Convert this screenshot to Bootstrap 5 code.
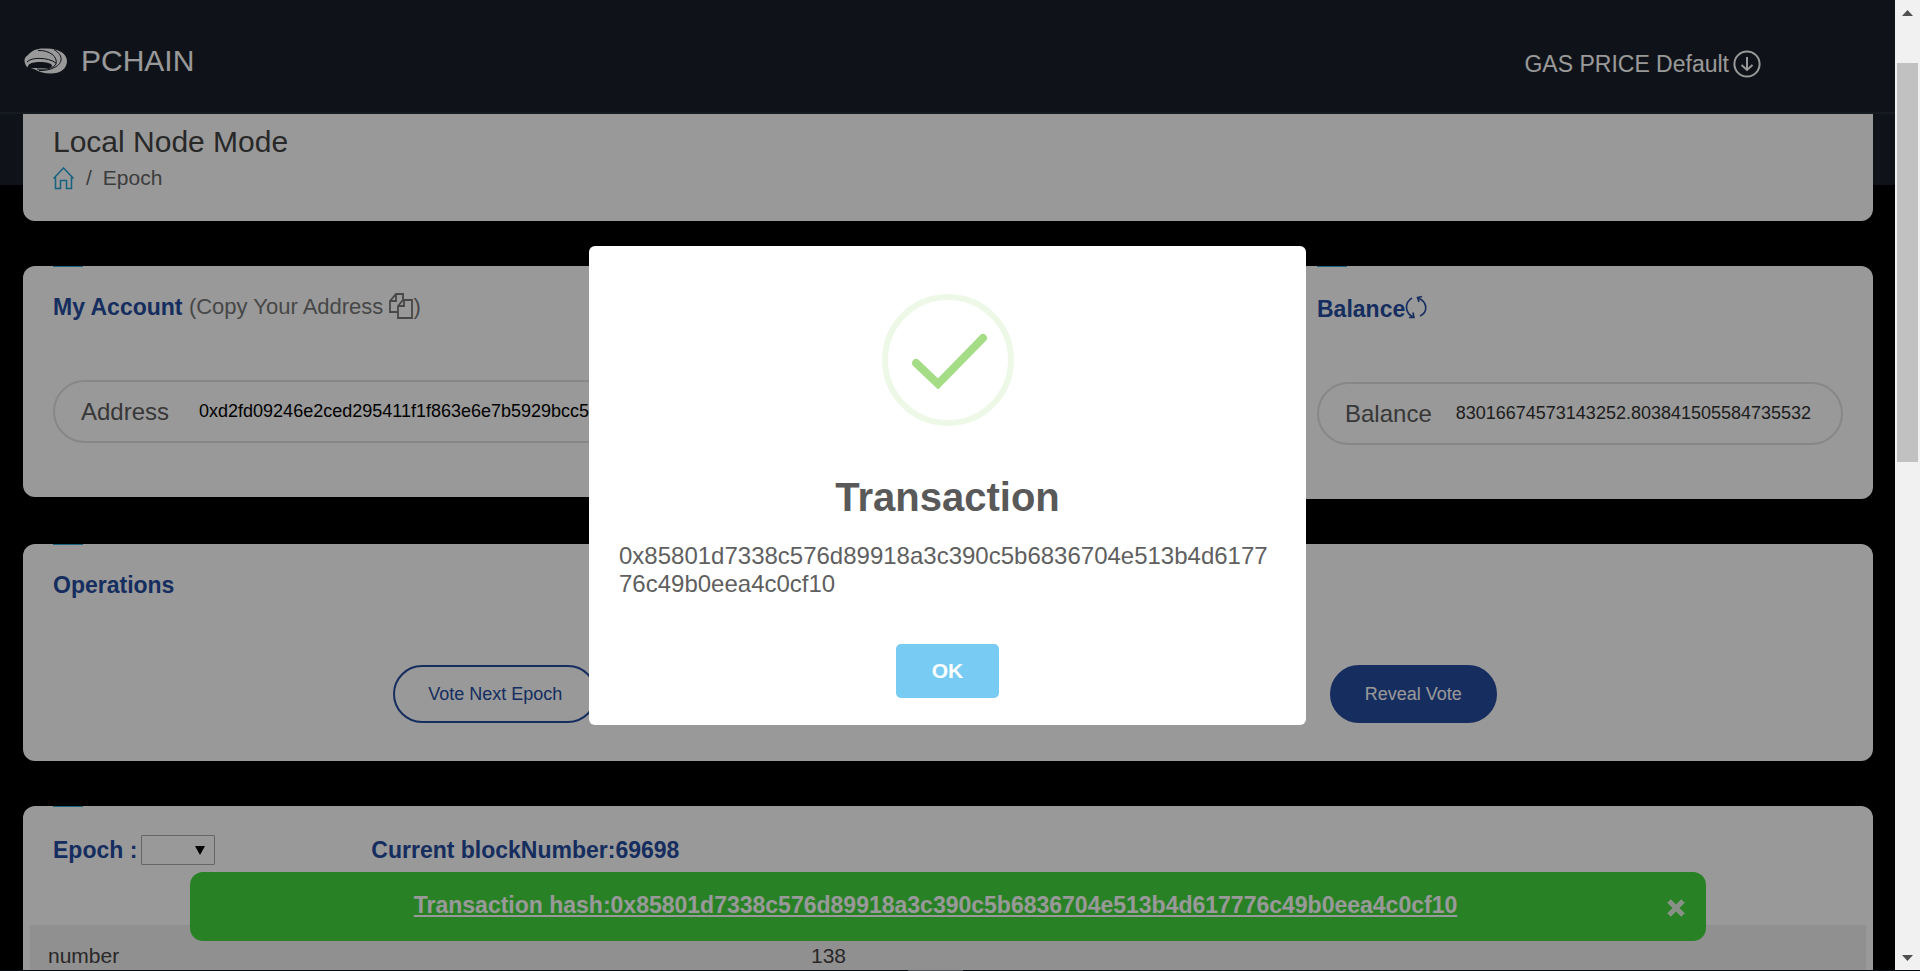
<!DOCTYPE html>
<html lang="en">
<head>
<meta charset="utf-8">
<meta name="viewport" content="width=device-width, initial-scale=1">
<title>PCHAIN</title>
<link href="https://cdn.jsdelivr.net/npm/bootstrap@5.3.0/dist/css/bootstrap.min.css" rel="stylesheet">
<style>
  body { font-family: "Liberation Sans", Arial, sans-serif; background: #000; color: #444; }
  .app-view { min-width: 0; }
  .topbar { background: #191f28; border-bottom: 2px solid #262d38; height: 114px; padding: 0 24px; }
  .brand-name { font-size: 30px; line-height: 32px; color: #fff; margin-left: 13px; }
  .brand-link { padding-top: 10px; }
  .gas-link { font-size: 23px; line-height: 28px; color: #fff; margin-right: 110px; }
  .page-area { background: linear-gradient(#191f28 0 71px, #000 71px); padding: 0 22px 0 23px; gap: 45px; }
  .panel { background: #fff; border-radius: 12px; padding: 0 30px; position: relative; }
  .panel-title::before { content: ""; position: absolute; top: 0; left: 30px; width: 30px; height: 1px; background: #2fa5d6; }
  .crumb-panel { border-radius: 0 0 12px 12px; height: 107px; padding-top: 10px; }
  .page-heading { font-size: 30px; line-height: 36px; color: #444; }
  .crumbs { font-size: 21px; line-height: 28px; color: #666; margin-top: 4px; gap: 11px; }
  .panel-title { font-size: 23px; line-height: 28px; font-weight: 700; color: #264b9e; margin: 0; padding-top: 27px; }
  .panel-title.low { padding-top: 29px; }
  .copy-link { font-size: 22px; font-weight: 400; color: #777; }
  .acct-row { display: grid; grid-template-columns: minmax(0, 1234fr) minmax(0, 586fr); gap: 30px; align-items: start; }
  .pill { border: 2px solid #e2e2e2; border-radius: 32px; height: 63px; padding: 0 26px; margin: 59px 0 54px; gap: 24px; }
  .pill.wide-gap { gap: 30px; }
  .pill label { font-size: 24px; line-height: 28px; color: #5c5c5c; }
  .pill input { border: 0; outline: 0; background: none; padding: 0; font-size: 18px; min-width: 0; color: #000; }
  .pill input.soft { color: #333; }
  .ops { padding: 66px 10px 38px 4px; }
  .ops-title { padding-left: 30px; }
  .vote-btn { font-size: 18px; line-height: 24px; border: 2px solid #264b9e; border-radius: 29px; padding: 15px 33px; color: #264b9e; background: none; }
  .vote-btn.solid { background: #264b9e; color: #fff; }
  .epoch-box { appearance: none; width: 74px; height: 30px; border: 1px solid #a9a9a9; border-radius: 1px; margin-left: 4px;
    background: #fff url("data:image/svg+xml,%3Csvg xmlns='http://www.w3.org/2000/svg' viewBox='0 0 10 9'%3E%3Cpath d='M0 0h10L5 9z'/%3E%3C/svg%3E") no-repeat right 9px center / 10px 9px; }
  .block-no { margin-left: 156px; }
  .grid-wrap { margin: 60px -23px 0; }
  .data-grid { font-size: 21px; line-height: 24px; color: #444; width: 100%; }
  .data-grid td { background: #f1f1f1; padding: 19px 18px 20px; }
  .data-grid td:first-child { width: 763px; }
  .notice { left: 10%; width: 80%; bottom: 29px; height: 69px; background: #44d93f; border-radius: 13px; padding: 0 24px 4px 0; }
  .notice a { font-size: 23px; line-height: 28px; font-weight: 700; color: #fff; }
  .notice button { right: 20px; top: 26px; border: 0; background: none; padding: 0; line-height: 0; }
  .shade { background: rgba(0, 0, 0, .4); }
  .dialog-box { background: #fff; width: 717px; border-radius: 6px; padding: 48px 30px 27px; color: #595959; }
  .dialog-title { font-size: 40px; line-height: 48px; font-weight: 700; color: #595959; margin: 47px 0 0; }
  .dialog-text { font-size: 24px; line-height: 28px; color: #5f5f5f; margin: 21px 0 46px; overflow-wrap: anywhere; }
  .ok-btn { width: 103px; height: 54px; border: 0; border-radius: 5px; background: #78cbf2; color: #fff; font-size: 21px; font-weight: 700; }
  .scroll-track { width: 25px; background: #f1f1f1; padding: 10px 2px 9px; }
  .scroll-thumb { background: #c1c1c1; height: 399px; margin-top: 47px; }
  .edge-strip { height: 1px; background: linear-gradient(90deg, #060c16 908px, #4a525c 908px 963px, #060c16 963px); }
</style>
</head>
<body class="vh-100 d-flex flex-column overflow-hidden">
<div class="d-flex flex-grow-1 overflow-hidden">
  <div class="app-view position-relative flex-grow-1 overflow-hidden">
    <header class="topbar d-flex align-items-center justify-content-between">
      <a href="#" class="brand-link d-flex align-items-center text-decoration-none">
        <svg width="44" height="26" viewBox="0 0 44 26" aria-hidden="true">
          <path fill="#fff" d="M3 19C0 15-1 10 4 7C8 2 14 0 21 .5C35 0 43 6 43 13C43 21 36 25.500 27 25.500C20 25.500 14 23.500 10 21z"/>
          <path fill="#191f28" d="M4 20C3 16 8 14 16 14C22 14 28 15 28 18C27 21 22 20 15 20z"/>
          <path fill="none" stroke="#191f28" stroke-width="1" d="M3 14C7 9 24 9 32 15M14 2.500C26 2 34 9 32 16C30 20 22 22 13 21M30 1.500C41 8 38 17 29 20C26 22 20 22.500 15 22.500"/>
        </svg>
        <span class="brand-name">PCHAIN</span>
      </a>
      <a href="#" class="gas-link d-flex align-items-center text-decoration-none pt-3">GAS PRICE Default
        <svg class="ms-1" width="28" height="28" viewBox="0 0 28 28" fill="none" stroke="#fff" stroke-width="2" aria-hidden="true"><circle cx="14" cy="14" r="12.6"/><path d="M14 7v13M8.500 15l5.500 5l5.500-5"/></svg>
      </a>
    </header>
    <main class="page-area d-flex flex-column">
      <section class="panel crumb-panel">
        <h1 class="page-heading m-0 fw-normal">Local Node Mode</h1>
        <nav class="crumbs d-flex align-items-center" aria-label="breadcrumb">
          <a href="#" class="d-flex" aria-label="Home"><svg width="22" height="23" viewBox="0 0 22 23" fill="none" stroke="#25a2d4" stroke-width="1.500"><path d="M.500 11.500L10.500 1l10 10.500M2.500 10v11.500h5v-8h6v8h5V10"/></svg></a>
          <span>/</span><span>Epoch</span>
        </nav>
      </section>
      <div class="acct-row">
        <section class="panel">
          <h2 class="panel-title d-flex">My Account&nbsp;<a href="#" class="copy-link d-flex text-decoration-none">(Copy Your Address&nbsp;<svg width="24" height="27" viewBox="0 0 24 27" fill="none" stroke="#777" stroke-width="1.800" aria-hidden="true"><path d="M9 19H1V8l6-7h7v6M1 8h6V1M9 13l5-6h9v18H9zM9 13h6V7"/></svg>)</a></h2>
          <div class="pill wide-gap d-flex align-items-center"><label for="address">Address</label><input id="address" class="flex-grow-1" value="0xd2fd09246e2ced295411f1f863e6e7b5929bcc5" readonly></div>
        </section>
        <section class="panel">
          <h2 class="panel-title low d-flex">Balance<svg width="23" height="25" viewBox="0 0 23 25" fill="none" stroke="#264b9e" stroke-width="1.600" aria-hidden="true"><path d="M7 3C-1 8 0 18 8 22M4 22.500h5l-1-5M15 21c8-4 8-14-2-18M17 1.500l-4.500 1l1.500 4.500"/></svg></h2>
          <div class="pill d-flex align-items-center"><label for="balance">Balance</label><input id="balance" class="soft flex-grow-1" value="83016674573143252.803841505584735532" readonly></div>
        </section>
      </div>
      <section class="panel px-0">
        <h2 class="panel-title ops-title">Operations</h2>
        <div class="ops d-flex justify-content-around">
          <button class="vote-btn" type="button">Vote Next Epoch</button>
          <button class="vote-btn solid" type="button">Reveal Vote</button>
        </div>
      </section>
      <section class="panel">
        <h2 class="panel-title low d-flex align-items-center"><label for="epoch">Epoch :</label><select id="epoch" class="epoch-box"><option></option></select><span class="block-no">Current blockNumber:69698</span></h2>
        <div class="grid-wrap">
          <table class="data-grid"><tbody><tr><td>number</td><td>138</td></tr></tbody></table>
        </div>
      </section>
    </main>
    <div class="notice position-absolute d-flex align-items-center justify-content-center" role="status">
      <a href="#">Transaction hash:0x85801d7338c576d89918a3c390c5b6836704e513b4d617776c49b0eea4c0cf10</a>
      <button type="button" class="position-absolute" aria-label="Close"><svg width="20" height="20" viewBox="0 0 20 20" stroke="#e2f2df" stroke-width="5"><path d="M3 3l14 14M17 3L3 17"/></svg></button>
    </div>
    <div class="shade position-absolute top-0 start-0 w-100 h-100 d-flex align-items-center justify-content-center">
      <div class="dialog-box" role="dialog" aria-labelledby="dlg-title">
        <div class="text-center">
          <svg class="d-block mx-auto" width="132" height="132" viewBox="0 0 132 132" fill="none" aria-hidden="true"><circle cx="66" cy="66" r="63" stroke="#edf8e7" stroke-width="6"/><path d="M34 69l22 21l45-46" stroke="#a5dc86" stroke-width="8" stroke-linecap="round"/></svg>
          <h2 class="dialog-title" id="dlg-title">Transaction</h2>
        </div>
        <p class="dialog-text">0x85801d7338c576d89918a3c390c5b6836704e513b4d617776c49b0eea4c0cf10</p>
        <div class="text-center"><button class="ok-btn" type="button">OK</button></div>
      </div>
    </div>
  </div>
  <div class="scroll-track d-flex flex-column" aria-hidden="true">
    <svg class="mx-auto" width="11" height="6" viewBox="0 0 11 6"><path fill="#505050" d="M0 6h11L5.500 0z"/></svg>
    <div class="scroll-thumb"></div>
    <svg class="mx-auto mt-auto" width="11" height="6" viewBox="0 0 11 6"><path fill="#505050" d="M0 0h11L5.500 6z"/></svg>
  </div>
</div>
<div class="edge-strip"></div>
<script src="https://cdn.jsdelivr.net/npm/bootstrap@5.3.0/dist/js/bootstrap.bundle.min.js"></script>
</body>
</html>
